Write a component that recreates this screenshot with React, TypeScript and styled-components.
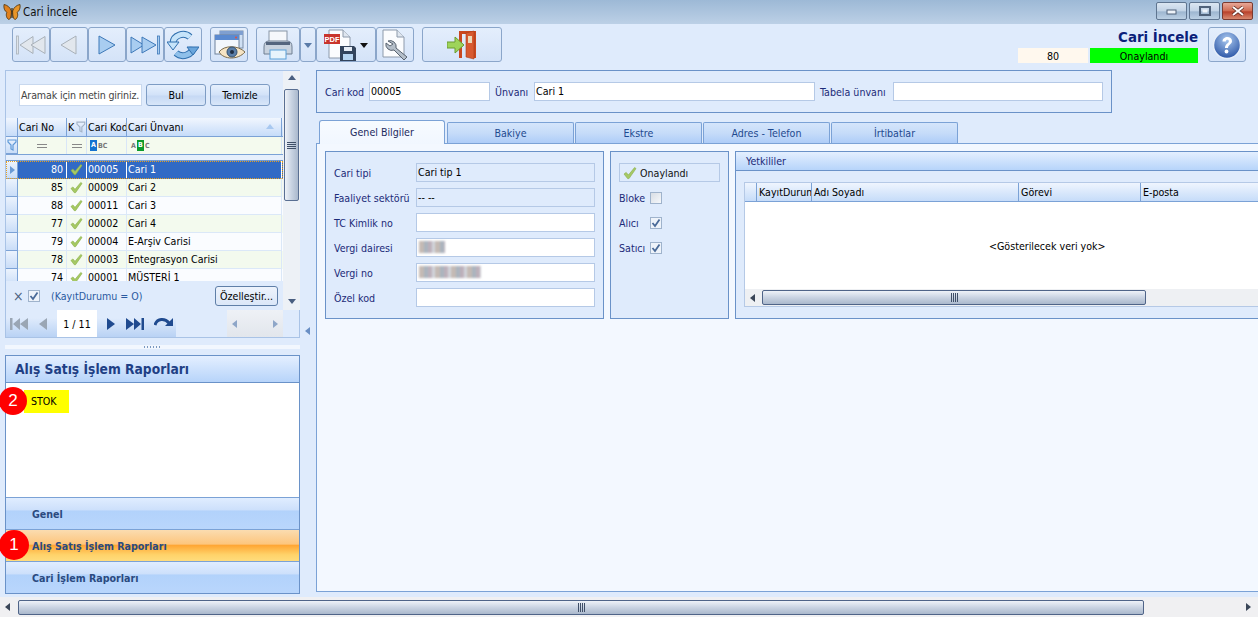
import styled, { createGlobalStyle } from 'styled-components';

const GlobalStyle = createGlobalStyle`
  html, body {
    margin: 0;
    padding: 0;
    background: #dfebfc;
  }
  body {
    font-family: "DejaVu Sans", "Liberation Sans", sans-serif;
    font-stretch: condensed;
    font-size: 10.6px;
    color: #000;
  }
  * {
    box-sizing: border-box;
  }
`;

const gridRows = [
  { no: 80, code: '00005', name: 'Cari 1', kind: 'selected' },
  { no: 85, code: '00009', name: 'Cari 2', kind: 'tint' },
  { no: 88, code: '00011', name: 'Cari 3', kind: 'plain' },
  { no: 77, code: '00002', name: 'Cari 4', kind: 'tint' },
  { no: 79, code: '00004', name: 'E-Arşiv Carisi', kind: 'plain' },
  { no: 78, code: '00003', name: 'Entegrasyon Carisi', kind: 'tint' },
  { no: 74, code: '00001', name: 'MÜŞTERİ 1', kind: 'plain' },
];

const tabs = ['Bakiye', 'Ekstre', 'Adres - Telefon', 'İrtibatlar'];

function Tick({ size = 14 }: { size?: number }) {
  return (
    <svg width={size} height={size} viewBox="0 0 14 14">
      <path d="M1 8l2.200-1.600L5.400 9 11.600 1.500 13 2.600 6 12.600H4.600z" fill="#a6c964" stroke="#86ab45" strokeWidth="0.6" />
    </svg>
  );
}

function Butterfly() {
  return (
    <svg width="18" height="18" viewBox="0 0 18 18">
      <path d="M8.400 8C7 4 4 2 1 1.500 .5 5 1.500 8 4 9.500 2.500 11 3.500 16 6 16.500 7.500 16 8.400 13 8.400 8z" fill="#e0801c" stroke="#5a3a10" strokeWidth="0.9" />
      <path d="M9.600 8C11 4 14 2 17 1.500 17.500 5 16.500 8 14 9.500 15.500 11 14.500 16 12 16.500 10.500 16 9.600 13 9.600 8z" fill="#e8962a" stroke="#5a3a10" strokeWidth="0.9" />
      <rect x="8.400" y="5" width="1.200" height="10" fill="#3a2a10" />
    </svg>
  );
}

function NavFirst() {
  return (
    <svg width="30" height="22" viewBox="0 0 30 22">
      <rect x="0.500" y="2" width="2" height="18" fill="#dfe4ea" stroke="#a9b1b9" strokeWidth="0.8" />
      <path d="M4 11L17 2.500v17z" fill="#e2e7ed" stroke="#a9b1b9" />
      <path d="M15 11L29 2.500v17z" fill="#e2e7ed" stroke="#a9b1b9" />
    </svg>
  );
}

function NavLast() {
  return (
    <svg width="30" height="22" viewBox="0 0 30 22">
      <path d="M1 3l13 8-13 8z" fill="#a8cdf0" stroke="#3d78b8" />
      <path d="M12 3l14 8-14 8z" fill="#a8cdf0" stroke="#3d78b8" />
      <rect x="27.500" y="2" width="2" height="18" fill="#a8cdf0" stroke="#3d78b8" strokeWidth="0.8" />
    </svg>
  );
}

function NavTriangle({ left }: { left?: boolean }) {
  return left ? (
    <svg width="20" height="22" viewBox="0 0 20 22">
      <path d="M2 11L17 2v18z" fill="#e2e7ed" stroke="#a9b1b9" />
    </svg>
  ) : (
    <svg width="20" height="22" viewBox="0 0 20 22">
      <path d="M2 2l16 9-16 9z" fill="#a8cdf0" stroke="#3d78b8" />
    </svg>
  );
}

function RefreshIcon() {
  const arc1 = 'M6 13a10 9 0 0 1 17-6';
  const arc2 = 'M26 17a10 9 0 0 1-17 6';
  return (
    <svg width="32" height="30" viewBox="0 0 32 30">
      <path d={arc1} fill="none" stroke="#2f6fae" strokeWidth="7" />
      <path d={arc2} fill="none" stroke="#2f6fae" strokeWidth="7" />
      <path d={arc1} fill="none" stroke="#c6e4fa" strokeWidth="5" />
      <path d={arc2} fill="none" stroke="#8fc0ea" strokeWidth="5" />
      <path d="M0 12h12l-6 8z" fill="#c6e4fa" stroke="#2f6fae" />
      <path d="M20 17h12l-6 8z" fill="#6aa6dc" stroke="#2f6fae" />
    </svg>
  );
}

function PreviewIcon() {
  return (
    <svg width="32" height="30" viewBox="0 0 32 30">
      <rect x="7" y="1" width="23" height="17" fill="#cfe0f4" stroke="#7a8ea8" />
      <rect x="7" y="1" width="23" height="4" fill="#7f9fd0" />
      <rect x="2" y="5" width="24" height="19" fill="#f3f7fc" stroke="#6f829c" />
      <rect x="2" y="5" width="24" height="5" fill="#5b8ad0" />
      <circle cx="23" cy="7.500" r="1" fill="#e8503a" />
      <path d="M6 22c5-7 19-7 26 0-7 8-21 8-26 0z" fill="#f6e4c4" stroke="#7a6a4a" />
      <circle cx="19" cy="22" r="5" fill="#5a7ea8" stroke="#33506f" />
      <circle cx="19" cy="22" r="2" fill="#1f2f44" />
    </svg>
  );
}

function PrinterIcon() {
  return (
    <svg width="32" height="30" viewBox="0 0 32 30">
      <rect x="7" y="1" width="18" height="11" fill="#f6f8fb" stroke="#8895a6" />
      <path d="M2 17q0-6 5-6h18q5 0 5 6v7H2z" fill="#c9d3df" stroke="#6f7e92" />
      <rect x="4" y="12" width="24" height="3" fill="#54657e" />
      <rect x="8" y="20" width="16" height="9" fill="#e8f4fc" stroke="#5aa0d8" />
    </svg>
  );
}

function PdfSaveIcon() {
  return (
    <svg width="32" height="32" viewBox="0 0 32 32">
      <path d="M5 1h14l7 7v21H5z" fill="#fbfcfe" stroke="#8d9aab" />
      <path d="M19 1v7h7" fill="#dfe6ef" stroke="#8d9aab" />
      <rect x="0" y="5" width="16" height="10" fill="#c8342c" />
      <text x="8" y="12.800" fontSize="7.500" fontWeight="700" fill="#fff" textAnchor="middle" fontFamily="Liberation Sans, sans-serif">PDF</text>
      <path d="M16 17h14l2 2v13H16z" fill="#33445c" />
      <rect x="20" y="18" width="8" height="4" fill="#e6edf6" />
      <rect x="19" y="25" width="10" height="6" fill="#b6d4f0" />
    </svg>
  );
}

function WrenchDocIcon() {
  return (
    <svg width="28" height="32" viewBox="0 0 28 32">
      <path d="M2 1h14l7 7v20H2z" fill="#fbfcfe" stroke="#8d9aab" />
      <path d="M16 1v7h7" fill="#dfe6ef" stroke="#8d9aab" />
      <path d="M7 12a6 6 0 0 1 8 7l11 9-3 3-10-10a6 6 0 0 1-8-7l4 3 3-2z" fill="#b4bec9" stroke="#59636f" />
    </svg>
  );
}

function ExitIcon() {
  return (
    <svg width="30" height="32" viewBox="0 0 30 32">
      <path d="M12 2h17v27h-3V5H15v24h-3z" fill="#c9481f" />
      <path d="M19 4l8-2v28l-8-2z" fill="#d85a30" stroke="#a83c18" strokeWidth="0.6" />
      <rect x="21" y="7" width="4" height="7" fill="#ecd9b8" />
      <path d="M0 13h8V8l9 8-9 8v-5H0z" fill="#9ed45a" stroke="#6a9c30" />
    </svg>
  );
}

function HelpIcon() {
  return (
    <svg width="30" height="30" viewBox="0 0 30 30">
      <defs>
        <radialGradient id="help" cx="50%" cy="30%" r="70%">
          <stop offset="0" stopColor="#a9c8ef" />
          <stop offset="1" stopColor="#2c56a6" />
        </radialGradient>
      </defs>
      <circle cx="15" cy="15" r="13.500" fill="url(#help)" stroke="#e6eef9" strokeWidth="1.500" />
      <path d="M10.500 11.500c0-6 9.500-6 9.500-.5 0 3.500-4 3.500-4 7h-3c0-4.500 3.800-4.500 3.800-6.800 0-2-3-2-3 .3z" fill="#fff" />
      <circle cx="14.500" cy="21.500" r="1.900" fill="#fff" />
    </svg>
  );
}

function WinGlyph({ kind }: { kind: 'min' | 'max' | 'close' }) {
  if (kind === 'min') {
    return (
      <svg width="12" height="8" viewBox="0 0 12 8">
        <rect x="1" y="3" width="9" height="4" fill="#eef3f9" stroke="#50627a" />
      </svg>
    );
  }
  if (kind === 'max') {
    return (
      <svg width="12" height="11" viewBox="0 0 12 11">
        <rect x="1" y="1" width="10" height="8" fill="none" stroke="#50627a" strokeWidth="2" />
        <rect x="3.500" y="3.500" width="5" height="3" fill="#eef3f9" />
      </svg>
    );
  }
  return (
    <svg width="14" height="10" viewBox="0 0 14 10">
      <path d="M2 1l10 8M12 1L2 9" stroke="#5a2a20" strokeWidth="3.500" />
      <path d="M2 1l10 8M12 1L2 9" stroke="#fff" strokeWidth="2" />
    </svg>
  );
}

function SmallArrow({ dir, color = '#4a5f80' }: { dir: 'left' | 'right' | 'up' | 'down'; color?: string }) {
  const d = { left: 'M7 1v8L2 5z', right: 'M3 1v8l5-4z', up: 'M1 7h8L5 2z', down: 'M1 3h8L5 8z' }[dir];
  return (
    <svg width="10" height="10" viewBox="0 0 10 10">
      <path d={d} fill={color} />
    </svg>
  );
}

function PagerIcon({ kind, off }: { kind: 'first' | 'prev' | 'next' | 'last'; off?: boolean }) {
  const c = off ? '#9aa6b4' : '#1f4a8f';
  if (kind === 'first') {
    return (
      <svg width="20" height="14" viewBox="0 0 20 14">
        <path d="M1 1h2.500v12H1zM11 1v12L4 7zM19 1v12l-8-6z" fill={c} />
      </svg>
    );
  }
  if (kind === 'prev') {
    return (
      <svg width="10" height="14" viewBox="0 0 10 14">
        <path d="M9 1v12L1 7z" fill={c} />
      </svg>
    );
  }
  if (kind === 'next') {
    return (
      <svg width="10" height="14" viewBox="0 0 10 14">
        <path d="M1 1v12l8-6z" fill={c} />
      </svg>
    );
  }
  return (
    <svg width="20" height="14" viewBox="0 0 20 14">
      <path d="M1 1v12l8-6zM9 1v12l7-6zM16.500 1H19v12h-2.500z" fill={c} />
    </svg>
  );
}

function PagerRefresh() {
  return (
    <svg width="20" height="14" viewBox="0 0 20 14">
      <path d="M1 8c2-7 10-7 14-2" fill="none" stroke="#1f4a8f" strokeWidth="3" />
      <path d="M11 9h8V1z" fill="#1f4a8f" />
    </svg>
  );
}

function FunnelIcon({ color }: { color: string }) {
  return (
    <svg width="10" height="12" viewBox="0 0 10 12">
      <path d="M1 1h8v2L6 6v5L4 10V6L1 3z" fill="none" stroke={color} strokeWidth="1.200" />
    </svg>
  );
}

function CheckMark() {
  return (
    <svg width="10" height="10" viewBox="0 0 10 10">
      <path d="M1.500 5l2.500 3L8.500 1.500" fill="none" stroke="#4a6a98" strokeWidth="1.800" />
    </svg>
  );
}

export default function App() {
  return (
    <>
      <GlobalStyle />
      <Window>
        <TitleBar>
          <Butterfly />
          <TitleText>Cari İncele</TitleText>
          <WindowButtons>
            <WindowButton><WinGlyph kind="min" /></WindowButton>
            <WindowButton><WinGlyph kind="max" /></WindowButton>
            <WindowButton $close><WinGlyph kind="close" /></WindowButton>
          </WindowButtons>
        </TitleBar>

        <Toolbar>
          <ToolGroup>
            <ToolButton $w={38}><NavFirst /></ToolButton>
            <ToolButton $w={38}><NavTriangle left /></ToolButton>
            <ToolButton $w={38}><NavTriangle /></ToolButton>
            <ToolButton $w={38}><NavLast /></ToolButton>
            <ToolButton $w={38}><RefreshIcon /></ToolButton>
          </ToolGroup>
          <ToolButton $w={38}><PreviewIcon /></ToolButton>
          <ToolGroup>
            <ToolButton $w={44}><PrinterIcon /></ToolButton>
            <ToolButton $w={16}><SmallArrow dir="down" color="#5a7ba8" /></ToolButton>
            <ToolButton $w={60}>
              <PdfSaveIcon />
              <SmallArrow dir="down" color="#111" />
            </ToolButton>
            <ToolButton $w={38}><WrenchDocIcon /></ToolButton>
          </ToolGroup>
          <ToolButton $w={80}><ExitIcon /></ToolButton>

          <StatusBlock>
            <PageTitle>Cari İncele</PageTitle>
            <StatusRow>
              <StatusCell $w={70} $bg="#fff8ee">80</StatusCell>
              <StatusCell $w={108} $bg="#00ff00">Onaylandı</StatusCell>
            </StatusRow>
          </StatusBlock>
          <ToolButton $w={38}><HelpIcon /></ToolButton>
        </Toolbar>

        <Workspace>
          <Sidebar>
            <SearchPanel>
              <SearchBody>
                <SearchBar>
                  <SearchInput>Aramak için metin giriniz.</SearchInput>
                  <PlainButton $w={60}>Bul</PlainButton>
                  <PlainButton $w={60}>Temizle</PlainButton>
                </SearchBar>

                <Grid>
                  <HeaderRow>
                    <HeaderCell />
                    <HeaderCell>Cari No</HeaderCell>
                    <HeaderCell>K<FunnelIcon color="#a4b4c8" /></HeaderCell>
                    <HeaderCell>Cari Kod</HeaderCell>
                    <HeaderCell>
                      Cari Ünvanı
                      <SortMark><SmallArrow dir="up" color="#a8c8f0" /></SortMark>
                    </HeaderCell>
                  </HeaderRow>
                  <FilterRow>
                    <IndicatorCell><FunnelIcon color="#5f9ad8" /></IndicatorCell>
                    <FilterCell $center><EqualMark /></FilterCell>
                    <FilterCell $center><EqualMark /></FilterCell>
                    <FilterCell>
                      <AbcBox $bg="#1472d0">A</AbcBox>
                      <AbcText>BC</AbcText>
                    </FilterCell>
                    <FilterCell>
                      <AbcText>A</AbcText>
                      <AbcBox $bg="#0b9a2c">B</AbcBox>
                      <AbcText>C</AbcText>
                    </FilterCell>
                  </FilterRow>
                  <FixedGap />
                  {gridRows.map((row) => (
                    <DataRow key={row.no} $kind={row.kind}>
                      <IndicatorCell>
                        {row.kind === 'selected' && <SmallArrow dir="right" color="#6a9ad4" />}
                      </IndicatorCell>
                      <NumberCell $kind={row.kind}>{row.no}</NumberCell>
                      <TickCell $kind={row.kind}><Tick size={13} /></TickCell>
                      <DataCell $kind={row.kind}>{row.code}</DataCell>
                      <DataCell $kind={row.kind}>{row.name}</DataCell>
                    </DataRow>
                  ))}
                </Grid>

                <FilterBar>
                  <CloseMark>×</CloseMark>
                  <CheckBox $on><CheckMark /></CheckBox>
                  <FilterText>(KayıtDurumu = O)</FilterText>
                  <CustomizeButton>Özelleştir...</CustomizeButton>
                </FilterBar>

                <Pager>
                  <PagerControls>
                    <PagerIcon kind="first" off />
                    <PagerIcon kind="prev" off />
                    <PageBox>1 / 11</PageBox>
                    <PagerIcon kind="next" />
                    <PagerIcon kind="last" />
                    <PagerRefresh />
                  </PagerControls>
                  <PagerScroll>
                    <SmallArrow dir="left" color="#8ea6c8" />
                    <SmallArrow dir="right" color="#8ea6c8" />
                  </PagerScroll>
                </Pager>
              </SearchBody>

              <VerticalScroll>
                <SmallArrow dir="up" color="#4a5f80" />
                <VerticalThumb><GripLines /></VerticalThumb>
                <SmallArrow dir="down" color="#4a5f80" />
              </VerticalScroll>
            </SearchPanel>

            <Splitter><SplitterDots /></Splitter>

            <ReportsPanel>
              <ReportsHeader>Alış Satış İşlem Raporları</ReportsHeader>
              <ReportsBody>
                <Marker $top={4} $left={-7} $size={28}>2</Marker>
                <StockTag>STOK</StockTag>
              </ReportsBody>
              <NavItem>Genel</NavItem>
              <NavItem $active>
                <Marker $top={0} $left={-7} $size={30}>1</Marker>
                Alış Satış İşlem Raporları
              </NavItem>
              <NavItem>Cari İşlem Raporları</NavItem>
            </ReportsPanel>
          </Sidebar>

          <Gutter><SmallArrow dir="left" color="#6a8fc4" /></Gutter>

          <Content>
            <HeaderPanel>
              <FieldLabel $w={44}>Cari kod</FieldLabel>
              <TextBox $w={121}>00005</TextBox>
              <FieldLabel $w={39}>Ünvanı</FieldLabel>
              <TextBox $w={281}>Cari 1</TextBox>
              <FieldLabel $w={73}>Tabela ünvanı</FieldLabel>
              <TextBox $w={210} />
            </HeaderPanel>

            <TabStrip>
              <ActiveTab>Genel Bilgiler</ActiveTab>
              {tabs.map((t) => (
                <Tab key={t}>{t}</Tab>
              ))}
            </TabStrip>

            <TabPage>
              <FormPanel>
                <FormRow>
                  <FormLabel>Cari tipi</FormLabel>
                  <TextBox $w={179} $readOnly>Cari tip 1</TextBox>
                </FormRow>
                <FormRow>
                  <FormLabel>Faaliyet sektörü</FormLabel>
                  <TextBox $w={179} $readOnly>-- --</TextBox>
                </FormRow>
                <FormRow>
                  <FormLabel>TC Kimlik no</FormLabel>
                  <TextBox $w={179} />
                </FormRow>
                <FormRow>
                  <FormLabel>Vergi dairesi</FormLabel>
                  <TextBox $w={179}><Redacted $w={26} /></TextBox>
                </FormRow>
                <FormRow>
                  <FormLabel>Vergi no</FormLabel>
                  <TextBox $w={179}><Redacted $w={62} /></TextBox>
                </FormRow>
                <FormRow>
                  <FormLabel>Özel kod</FormLabel>
                  <TextBox $w={179} />
                </FormRow>
              </FormPanel>

              <StatePanel>
                <ApprovedBox><Tick size={14} />Onaylandı</ApprovedBox>
                <StateRow>
                  <StateLabel>Bloke</StateLabel>
                  <CheckBox />
                </StateRow>
                <StateRow>
                  <StateLabel>Alıcı</StateLabel>
                  <CheckBox $on><CheckMark /></CheckBox>
                </StateRow>
                <StateRow>
                  <StateLabel>Satıcı</StateLabel>
                  <CheckBox $on><CheckMark /></CheckBox>
                </StateRow>
              </StatePanel>

              <ContactsPanel>
                <ContactsHeader>Yetkililer</ContactsHeader>
                <ContactsGrid>
                  <ContactsHead>
                    <ContactsCol $w={12} />
                    <ContactsCol $w={55}>KayıtDurum</ContactsCol>
                    <ContactsCol $w={207}>Adı Soyadı</ContactsCol>
                    <ContactsCol $w={122}>Görevi</ContactsCol>
                    <ContactsCol $w={125}>E-posta</ContactsCol>
                  </ContactsHead>
                  <EmptyRows>&lt;Gösterilecek veri yok&gt;</EmptyRows>
                  <ContactsScroll>
                    <SmallArrow dir="left" color="#3a4658" />
                    <HorizontalThumb $w={384}><GripLines $row /></HorizontalThumb>
                  </ContactsScroll>
                </ContactsGrid>
              </ContactsPanel>
            </TabPage>
          </Content>
        </Workspace>

        <BottomScroll>
          <SmallArrow dir="left" color="#3a4658" />
          <HorizontalThumb $w={1126}><GripLines $row /></HorizontalThumb>
          <BottomRight><SmallArrow dir="right" color="#3a4658" /></BottomRight>
        </BottomScroll>
      </Window>
    </>
  );
}

const Window = styled.div`
  width: 1258px;
  height: 617px;
  overflow: hidden;
  display: flex;
  flex-direction: column;
  background: #dfebfc;
`;

const TitleBar = styled.div`
  height: 24px;
  flex: none;
  display: flex;
  align-items: center;
  padding: 0 5px 0 3px;
  gap: 2px;
  background: linear-gradient(#9db9d6, #bcd0e6);
`;

const TitleText = styled.span`
  font-size: 11.4px;
  color: #111;
`;

const WindowButtons = styled.div`
  margin-left: auto;
  margin-top: -2px;
  display: flex;
  gap: 2px;
`;

const WindowButton = styled.div<{ $close?: boolean }>`
  width: 31px;
  height: 18px;
  display: flex;
  align-items: center;
  justify-content: center;
  border: 1px solid ${(p) => (p.$close ? '#7a3a30' : '#5f7590')};
  border-radius: 2px;
  background: ${(p) =>
    p.$close
      ? 'linear-gradient(#e8a898, #cf6a50 50%, #b8402a 55%, #d88a70)'
      : 'linear-gradient(#dbe6f2, #c2d3e6 50%, #9db6d0 55%, #bcd0e4)'};
`;

const Toolbar = styled.div`
  height: 46px;
  flex: none;
  display: flex;
  align-items: flex-start;
  gap: 8px;
  padding: 3px 12px 0;
`;

const ToolGroup = styled.div`
  display: flex;
`;

const ToolButton = styled.div<{ $w: number }>`
  width: ${(p) => p.$w}px;
  height: 35px;
  display: flex;
  align-items: center;
  justify-content: center;
  gap: 3px;
  border: 1px solid #8ba6ca;
  border-radius: 3px;
  background: linear-gradient(#e4eefc, #d4e3f8);
`;

const StatusBlock = styled.div`
  margin-left: auto;
  width: 180px;
  margin-top: 1px;
  display: flex;
  flex-direction: column;
  align-items: flex-end;
  margin-right: 2px;
`;

const PageTitle = styled.div`
  font-stretch: normal;
  font-size: 13.4px;
  font-weight: 700;
  line-height: 20px;
  color: #0b1f7a;
`;

const StatusRow = styled.div`
  display: flex;
  gap: 2px;
`;

const StatusCell = styled.div<{ $w: number; $bg: string }>`
  width: ${(p) => p.$w}px;
  height: 15px;
  line-height: 16px;
  text-align: center;
  background: ${(p) => p.$bg};
`;

const Workspace = styled.div`
  height: 527px;
  flex: none;
  display: flex;
  padding-left: 5px;
`;

const Sidebar = styled.div`
  width: 295px;
  flex: none;
  display: flex;
  flex-direction: column;
`;

const SearchPanel = styled.div`
  height: 268px;
  flex: none;
  display: flex;
  align-items: flex-start;
  border: 1px solid #a9c3e6;
`;

const SearchBody = styled.div`
  width: 277px;
  height: 100%;
  flex: none;
  display: flex;
  flex-direction: column;
`;

const SearchBar = styled.div`
  height: 47px;
  flex: none;
  display: flex;
  align-items: flex-start;
  gap: 4px;
  padding: 13px 0 0 13px;
`;

const SearchInput = styled.div`
  width: 123px;
  height: 22px;
  line-height: 20px;
  padding-left: 1px;
  letter-spacing: -0.15px;
  background: #fff;
  border: 1px solid #c8d8ee;
  color: #444;
  white-space: nowrap;
  overflow: hidden;
`;

const PlainButton = styled.div<{ $w: number }>`
  width: ${(p) => p.$w}px;
  height: 22px;
  line-height: 20px;
  text-align: center;
  border: 1px solid #7d9cc4;
  border-radius: 3px;
  background: linear-gradient(#e6f0fd, #d2e2f8 50%, #c6d9f4 55%, #d8e6f9);
`;

const Grid = styled.div`
  height: 163px;
  flex: none;
  overflow: hidden;
  display: flex;
  flex-direction: column;
`;

const columns = '12px 49px 20px 40px 155px';

const HeaderRow = styled.div`
  height: 19px;
  flex: none;
  display: grid;
  grid-template-columns: ${columns};
  background: linear-gradient(#f1f6fe, #c6dcf9);
  border-bottom: 1px solid #7ba2d6;
`;

const HeaderCell = styled.div`
  position: relative;
  display: flex;
  align-items: center;
  gap: 2px;
  padding-left: 1px;
  border-right: 1px solid #7ba2d6;
  white-space: nowrap;
  overflow: hidden;
`;

const SortMark = styled.span`
  position: absolute;
  right: 6px;
  top: 4px;
`;

const FilterRow = styled.div`
  height: 18px;
  flex: none;
  display: grid;
  grid-template-columns: ${columns};
  background: #f4faee;
  border-bottom: 1px solid #7ba2d6;
`;

const IndicatorCell = styled.div`
  display: flex;
  align-items: center;
  justify-content: center;
  background: linear-gradient(#ecf3fd, #c9ddf8);
  border-right: 1px solid #7ba2d6;
  border-bottom: 1px solid #7ba2d6;
`;

const FilterCell = styled.div<{ $center?: boolean }>`
  display: flex;
  align-items: center;
  justify-content: ${(p) => (p.$center ? 'center' : 'flex-start')};
  padding-left: ${(p) => (p.$center ? 0 : '3px')};
  border-right: 1px solid #d9e6f7;
`;

const EqualMark = styled.span`
  width: 10px;
  height: 4px;
  border-top: 1px solid #888;
  border-bottom: 1px solid #888;
`;

const AbcBox = styled.span<{ $bg: string }>`
  width: 7px;
  height: 11px;
  line-height: 11px;
  font-size: 7px;
  font-weight: 700;
  text-align: center;
  color: #fff;
  background: ${(p) => p.$bg};
`;

const AbcText = styled.span`
  font-size: 7px;
  font-weight: 700;
  color: #777;
  margin: 0 1px;
`;

const FixedGap = styled.div`
  height: 6px;
  flex: none;
  background: #e6effc;
  border-bottom: 1px solid #6f9bd6;
`;

const DataRow = styled.div<{ $kind: string }>`
  height: 18px;
  flex: none;
  display: grid;
  grid-template-columns: ${columns};
  background: ${(p) =>
    p.$kind === 'selected' ? '#316ac5' : p.$kind === 'tint' ? '#f3faee' : '#fafcff'};
  color: ${(p) => (p.$kind === 'selected' ? '#fff' : '#000')};
  outline: ${(p) => (p.$kind === 'selected' ? '1px dotted #e8a020' : 'none')};
  outline-offset: -1px;
`;

const DataCell = styled.div<{ $kind: string }>`
  line-height: 17px;
  padding-left: 1px;
  white-space: nowrap;
  overflow: hidden;
  border-right: 1px solid ${(p) => (p.$kind === 'selected' ? '#fff' : '#dbe8f8')};
  border-bottom: 1px solid ${(p) => (p.$kind === 'selected' ? 'transparent' : '#dbe8f8')};
`;

const NumberCell = styled(DataCell)`
  text-align: right;
  padding: 0 3px 0 0;
`;

const TickCell = styled(DataCell)`
  display: flex;
  align-items: center;
  justify-content: center;
  padding: 0;
`;

const FilterBar = styled.div`
  height: 29px;
  flex: none;
  display: flex;
  align-items: center;
  padding: 0 5px 0 7px;
  background: #dfebfc;
`;

const CloseMark = styled.span`
  font-size: 14px;
  color: #4a5f80;
  width: 15px;
`;

const CheckBox = styled.span<{ $on?: boolean }>`
  width: 12px;
  height: 12px;
  flex: none;
  display: inline-flex;
  align-items: center;
  justify-content: center;
  border: 1px solid #9fb3cc;
  background: ${(p) => (p.$on ? '#eef3fa' : 'linear-gradient(135deg, #d8dde4, #f6f8fb)')};
`;

const FilterText = styled.span`
  margin-left: 11px;
  color: #2a5aa0;
`;

const CustomizeButton = styled.span`
  margin-left: auto;
  width: 63px;
  height: 20px;
  line-height: 18px;
  text-align: center;
  border: 1px solid #5f7fa8;
  border-radius: 3px;
  background: linear-gradient(#edf3fc, #dbe7f8);
  white-space: nowrap;
`;

const Pager = styled.div`
  flex: 1;
  display: flex;
  justify-content: space-between;
`;

const PagerControls = styled.div`
  width: 170px;
  display: flex;
  align-items: center;
  gap: 9px;
  padding-left: 3px;
  background: linear-gradient(#dfebfc 30%, #b9d2f4);
`;

const PageBox = styled.span`
  width: 40px;
  height: 100%;
  display: flex;
  align-items: center;
  justify-content: center;
  background: #fff;
`;

const PagerScroll = styled.div`
  width: 56px;
  display: flex;
  align-items: center;
  justify-content: space-between;
  padding: 0 3px;
  background: linear-gradient(#eef1f6, #e2e6ec);
`;

const VerticalScroll = styled.div`
  flex: 1;
  height: 239px;
  display: flex;
  flex-direction: column;
  align-items: center;
  justify-content: flex-start;
  padding: 2px 1px;
  background: #edf1f6;

  > svg:last-child {
    margin-top: auto;
    margin-bottom: 2px;
  }
`;

const VerticalThumb = styled.div`
  width: 15px;
  height: 112px;
  margin-top: 6px;
  display: flex;
  align-items: center;
  justify-content: center;
  border: 1px solid #5a6f92;
  border-radius: 2px;
  background: linear-gradient(90deg, #eef2f8, #c9d3e2 50%, #aab8cc);
`;

const GripLines = styled.span<{ $row?: boolean }>`
  display: block;
  width: ${(p) => (p.$row ? '7px' : '9px')};
  height: ${(p) => (p.$row ? '9px' : '7px')};
  background: ${(p) =>
    p.$row
      ? 'repeating-linear-gradient(90deg, #3f4f68 0 1px, transparent 1px 2px)'
      : 'repeating-linear-gradient(#3f4f68 0 1px, transparent 1px 2px)'};
`;

const Splitter = styled.div`
  height: 17px;
  flex: none;
  padding-top: 7px;
`;

const SplitterDots = styled.div`
  height: 4px;
  background:
    repeating-linear-gradient(90deg, #7a98c0 0 1px, transparent 1px 3px) center / 18px 2px no-repeat,
    #f2f7fe;
`;

const ReportsPanel = styled.div`
  height: 239px;
  width: 295px;
  flex: none;
  display: flex;
  flex-direction: column;
  border: 1px solid #6a92c8;
`;

const ReportsHeader = styled.div`
  height: 27px;
  flex: none;
  line-height: 27px;
  padding-left: 9px;
  font-size: 13.7px;
  font-weight: 700;
  color: #1f3f85;
  background: linear-gradient(#e4efff, #b7d4fa);
  border-bottom: 1px solid #6a92c8;
`;

const ReportsBody = styled.div`
  position: relative;
  height: 114px;
  flex: none;
  padding: 7px 0 0 18px;
  background: #fff;
`;

const StockTag = styled.span`
  display: block;
  width: 45px;
  height: 23px;
  line-height: 23px;
  padding-left: 7px;
  background: #ffff00;
`;

const Marker = styled.span<{ $top: number; $left: number; $size: number }>`
  position: absolute;
  top: ${(p) => p.$top}px;
  left: ${(p) => p.$left}px;
  width: ${(p) => p.$size}px;
  height: ${(p) => p.$size}px;
  line-height: ${(p) => p.$size}px;
  border-radius: 50%;
  text-align: center;
  font-family: "Liberation Sans", sans-serif;
  font-stretch: normal;
  font-size: 17px;
  font-weight: 400;
  color: #fff;
  background: #ff0000;
  z-index: 2;
`;

const NavItem = styled.div<{ $active?: boolean }>`
  position: relative;
  height: 32px;
  flex: none;
  line-height: 32px;
  padding-left: 26px;
  font-weight: 700;
  color: #2a4a80;
  background: ${(p) =>
    p.$active
      ? 'linear-gradient(#fbdcb0, #fdc67e 45%, #ffa735 50%, #ffd36a 80%, #ffdc7c)'
      : 'linear-gradient(#e0edff, #cde0fb 38%, #b2d2fb 42%, #b9d6fc)'};
  border-top: 1px solid #7ba2d6;
`;

const Gutter = styled.div`
  width: 16px;
  flex: none;
  display: flex;
  justify-content: center;
  padding-top: 256px;
`;

const Content = styled.div`
  width: 942px;
  flex: none;
  display: flex;
  flex-direction: column;
`;

const HeaderPanel = styled.div`
  width: 796px;
  height: 43px;
  flex: none;
  display: flex;
  align-items: center;
  padding-left: 8px;
  border: 1px solid #6a92c8;
`;

const FieldLabel = styled.span<{ $w: number }>`
  width: ${(p) => p.$w}px;
  flex: none;
  color: #1c2a78;
  white-space: nowrap;

  &:not(:first-child) {
    margin-left: 5px;
  }
`;

const TextBox = styled.div<{ $w: number; $readOnly?: boolean }>`
  width: ${(p) => p.$w}px;
  height: 19px;
  line-height: 17px;
  flex: none;
  padding-left: 1px;
  border: 1px solid #b5c9e6;
  background: ${(p) => (p.$readOnly ? 'transparent' : '#fff')};
  white-space: nowrap;
  overflow: hidden;
`;

const TabStrip = styled.div`
  flex: none;
  height: 24px;
  margin-top: 6px;
  padding-left: 3px;
  display: flex;
  align-items: flex-end;
  gap: 1px;
`;

const ActiveTab = styled.div`
  width: 126px;
  height: 24px;
  margin-right: 1px;
  line-height: 22px;
  text-align: center;
  color: #1c2a60;
  border: 1px solid #7ba2d6;
  border-bottom: none;
  border-radius: 3px 3px 0 0;
  background: linear-gradient(#f7fbff, #f1f7ff);
  margin-bottom: -1px;
  z-index: 1;
`;

const Tab = styled.div`
  width: 127px;
  height: 21px;
  line-height: 20px;
  text-align: center;
  color: #1f4a8f;
  border: 1px solid #7ba2d6;
  border-bottom: none;
  border-radius: 2px 2px 0 0;
  background: linear-gradient(#d5e5fb, #c6dcf9 50%, #aecdf8);
`;

const TabPage = styled.div`
  height: 449px;
  flex: none;
  display: flex;
  align-items: flex-start;
  gap: 6px;
  padding: 7px 0 0 8px;
  border: 1px solid #7ba2d6;
  border-right: none;
  background: #f3f8ff;
`;

const Panel = styled.div`
  height: 168px;
  flex: none;
  border: 1px solid #6a92c8;
  background: #dfebfc;
`;

const FormPanel = styled(Panel)`
  width: 279px;
  padding: 11px 0 0 8px;
  display: flex;
  flex-direction: column;
  gap: 6px;
`;

const FormRow = styled.div`
  display: flex;
  align-items: center;
`;

const FormLabel = styled.span`
  width: 82px;
  flex: none;
  color: #1c2a78;
  white-space: nowrap;
`;

const Redacted = styled.span<{ $w: number }>`
  display: block;
  width: ${(p) => p.$w}px;
  height: 12px;
  margin: 2px 0 0 1px;
  filter: blur(1px);
  background: repeating-linear-gradient(90deg, #c4bab4 0 5px, #aab4be 5px 9px, #bdb0ba 9px 13px, #d2d6dc 13px 16px);
`;

const StatePanel = styled(Panel)`
  width: 119px;
  padding: 11px 8px 0;
  display: flex;
  flex-direction: column;
`;

const ApprovedBox = styled.div`
  width: 101px;
  height: 19px;
  display: flex;
  align-items: center;
  gap: 3px;
  padding-left: 3px;
  margin-bottom: 3px;
  border: 1px solid #b5c9e6;
  color: #111;
`;

const StateRow = styled.div`
  height: 25px;
  display: flex;
  align-items: center;
`;

const StateLabel = styled.span`
  width: 31px;
  color: #1c2a78;
`;

const ContactsPanel = styled(Panel)`
  width: 530px;
`;

const ContactsHeader = styled.div`
  height: 19px;
  line-height: 18px;
  padding-left: 10px;
  color: #1c2a78;
  background: linear-gradient(#e4efff, #b7d4fa);
  border-bottom: 1px solid #6a92c8;
`;

const ContactsGrid = styled.div`
  width: 521px;
  height: 125px;
  margin: 11px 0 0 8px;
  display: flex;
  flex-direction: column;
  border: 1px solid #b5c9e6;
  border-right: none;
`;

const ContactsHead = styled.div`
  height: 19px;
  flex: none;
  display: flex;
  background: linear-gradient(#eff5fe, #c6dcf9);
  border-bottom: 1px solid #7ba2d6;
`;

const ContactsCol = styled.div<{ $w: number }>`
  width: ${(p) => p.$w}px;
  flex: none;
  line-height: 18px;
  padding-left: 2px;
  border-right: 1px solid #7ba2d6;
  white-space: nowrap;
  overflow: hidden;
`;

const EmptyRows = styled.div`
  flex: 1;
  display: flex;
  align-items: center;
  padding: 0 0 0 244px;
  background: #fff;
`;

const ContactsScroll = styled.div`
  height: 17px;
  flex: none;
  display: flex;
  align-items: center;
  padding-left: 3px;
  gap: 4px;
  background: #eef0f3;
`;

const HorizontalThumb = styled.div<{ $w: number }>`
  width: ${(p) => p.$w}px;
  height: 15px;
  flex: none;
  display: flex;
  align-items: center;
  justify-content: center;
  border: 1px solid #4f6488;
  border-radius: 2px;
  background: linear-gradient(#eef2f8, #c9d3e2 50%, #aab8cc);
`;

const BottomScroll = styled.div`
  height: 20px;
  flex: none;
  display: flex;
  align-items: center;
  gap: 5px;
  padding-left: 3px;
  background: #f0f0f2;
`;

const BottomRight = styled.div`
  margin-left: auto;
  padding-right: 5px;
  display: flex;
`;
